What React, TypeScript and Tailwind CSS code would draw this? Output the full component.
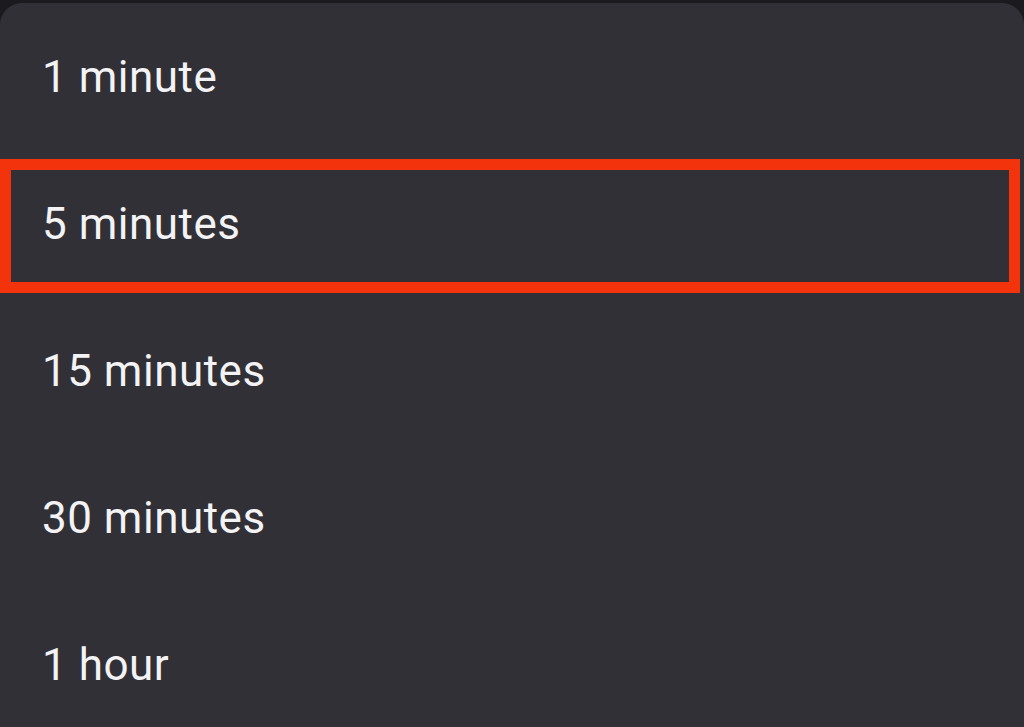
const options = ["1 minute", "5 minutes", "15 minutes", "30 minutes", "1 hour"];

export default function App() {
  return (
    <div className="h-[727px] w-[1024px] overflow-hidden bg-[#1b1a1f] pt-[3px]">
      <div className="h-full rounded-t-[22px] bg-[#313036] font-['Roboto',sans-serif] text-[#f3f3f5]">
        {options.map((label, i) => (
          <div key={label} className="relative flex h-[147px] items-center pl-[42px]">
            <span className="text-[44px] leading-none tracking-[0.5px]">{label}</span>
            {i === 1 && (
              <div className="pointer-events-none absolute left-0 top-[9px] h-[134px] w-[1020px] border-[11px] border-[#f3330c]" />
            )}
          </div>
        ))}
      </div>
    </div>
  );
}
